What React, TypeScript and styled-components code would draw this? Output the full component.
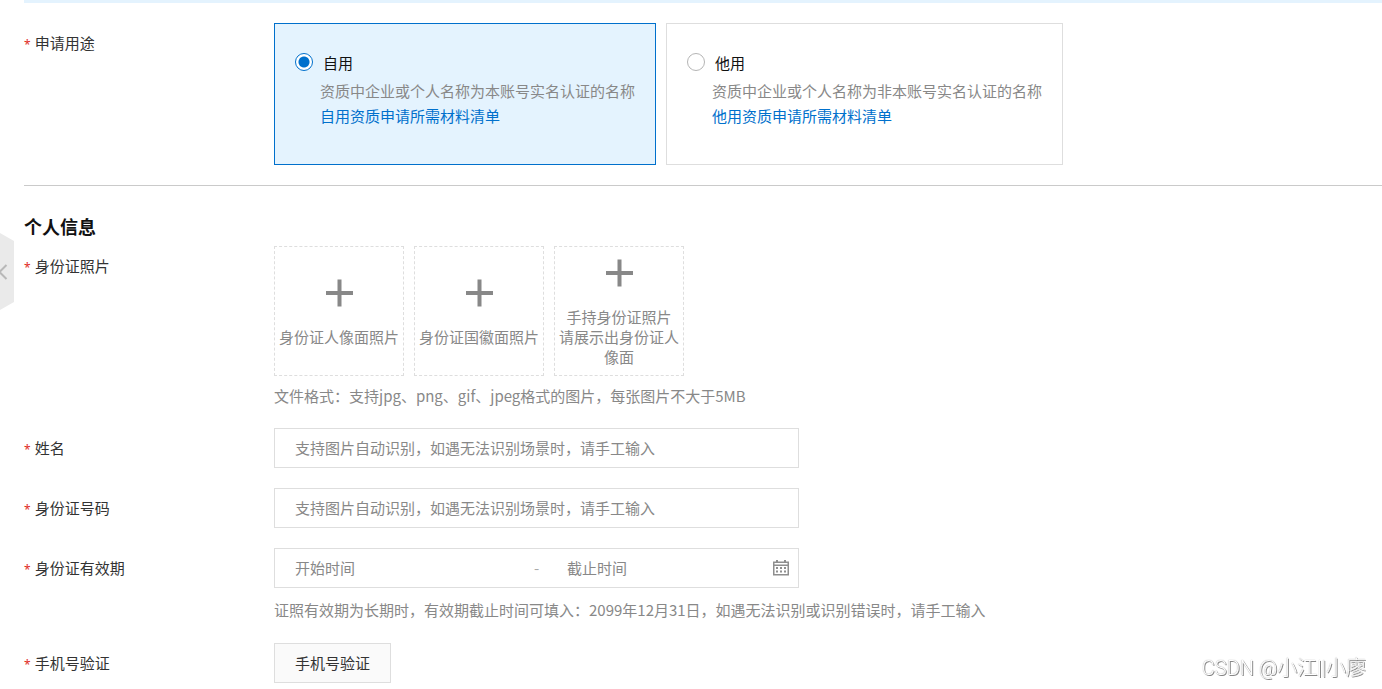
import React, { useState } from "react";
import styled, { createGlobalStyle } from "styled-components";

const BLUE = "#0070cc";
const BORDER = "#dedede";
const MUTED = "#888888";

const GlobalStyle = createGlobalStyle`
  * { box-sizing: border-box; }
  body {
    margin: 0;
    background: #fff;
    color: #333;
    font-family: "Noto Sans CJK SC", sans-serif;
    font-size: 15px;
  }
  input, button { font: inherit; color: inherit; }
`;

const Page = styled.main`
  padding-left: 24px;
`;

const Banner = styled.div`
  height: 3px;
  background: #e4f3fe;
`;

const Section = styled.section`
  padding: 20px 0;
  border-bottom: 1px solid #cacaca;
`;

const PersonalForm = styled.form`
  display: flex;
  flex-direction: column;
  gap: 20px;
  padding-bottom: 6px;
`;

const Heading = styled.h2`
  margin: 28px 0 8px;
  color: #111;
  font-size: 18px;
  font-weight: 700;
  line-height: 24px;
`;

const Row = styled.div`
  display: grid;
  grid-template-columns: 250px minmax(0, 1fr);
  align-items: start;
`;

const Label = styled.label`
  line-height: 40px;
`;

const Star = styled.span`
  margin-right: 4px;
  color: #e02b1d;
  font-family: "Noto Sans", sans-serif;
  font-size: 12px;
  line-height: 1;
`;

const Choices = styled.div`
  display: flex;
  flex-wrap: wrap;
  gap: 10px;
`;

const Card = styled.div<{ $active: boolean }>`
  display: grid;
  grid-template-columns: 18px auto;
  column-gap: 7px;
  align-content: start;
  min-height: 142px;
  padding: 27px 20px 20px;
  border: 1px solid ${(p) => (p.$active ? BLUE : BORDER)};
  background: ${(p) => (p.$active ? "#e4f3fe" : "#fff")};
`;

const Radio = styled.input`
  appearance: none;
  width: 18px;
  height: 18px;
  margin: 2px 0 0;
  border: 1px solid #b5b5b5;
  border-radius: 50%;
  background: #fff;
  &:checked {
    border-color: ${BLUE};
    background: radial-gradient(circle, ${BLUE} 0 5px, #fff 6px);
  }
`;

const CardTitle = styled.label`
  padding-left: 3px;
  color: #111;
  line-height: 24px;
`;

const CardText = styled.p`
  grid-column: 2;
  margin: 3px 0 0;
  color: ${MUTED};
  line-height: 25px;
`;

const CardLink = styled.a`
  grid-column: 2;
  color: ${BLUE};
  line-height: 25px;
  text-decoration: none;
`;

const Uploads = styled.div`
  display: flex;
  flex-wrap: wrap;
  gap: 10px;
`;

const Upload = styled.button`
  display: flex;
  flex-direction: column;
  align-items: center;
  justify-content: center;
  gap: 20px;
  width: 130px;
  height: 130px;
  padding: 4px 4px 0;
  border: 1px dashed ${BORDER};
  background: #fff;
  color: ${MUTED};
  line-height: 20px;
`;

const UploadName = styled.span`
  white-space: pre-line;
`;

const Hint = styled.p<{ $roomy?: boolean }>`
  margin: 0;
  padding: ${(p) => (p.$roomy ? "11px 0 2px" : "9px 0 1px")};
  color: ${MUTED};
  line-height: 22px;
`;

const TextInput = styled.input`
  display: block;
  width: 100%;
  max-width: 525px;
  height: 40px;
  padding: 0 20px 2px;
  border: 1px solid ${BORDER};
  background: #fff;
  &::placeholder { color: ${MUTED}; opacity: 1; }
`;

const DateRange = styled.div`
  display: flex;
  align-items: center;
  max-width: 525px;
  height: 40px;
  padding: 0 9px 0 20px;
  border: 1px solid ${BORDER};
  color: ${MUTED};
`;

const DateInput = styled.input<{ $grow?: boolean }>`
  flex: ${(p) => (p.$grow ? "1 1 0" : "0 1 239px")};
  min-width: 0;
  padding: 0 0 2px;
  border: 0;
  background: transparent;
  outline: none;
  &::placeholder { color: ${MUTED}; opacity: 1; }
`;

const Dash = styled.span`
  width: 33px;
  padding-bottom: 2px;
  color: #aaa;
`;

const IconButton = styled.button`
  display: flex;
  padding: 0;
  border: 0;
  background: none;
`;

const VerifyButton = styled.button`
  height: 40px;
  padding: 0 20px 2px;
  border: 1px solid ${BORDER};
  background: #fafafa;
`;

const CollapseTab = styled.button`
  position: fixed;
  top: 233px;
  left: 0;
  display: flex;
  align-items: center;
  width: 14px;
  height: 77px;
  padding: 0;
  border: 0;
  background: #eaeaea;
  clip-path: polygon(0 0, 100% 8px, 100% 69px, 0 100%);
`;

const Watermark = styled.div`
  position: fixed;
  right: 16px;
  bottom: 6px;
  color: #fff;
  font-family: Roboto, "Noto Sans CJK SC", sans-serif;
  font-size: 20px;
  font-weight: 300;
  line-height: 30px;
  text-shadow: 1px 1px 0 #888, 0 0 1px #888;
`;

function PlusIcon() {
  return (
    <svg width="28" height="28" viewBox="0 0 28 28" fill={MUTED} aria-hidden="true">
      <path d="M12.500.5h4v11.500H28v4H16.500v11.500h-4V16H1v-4h11.500z" />
    </svg>
  );
}

function CalendarIcon() {
  return (
    <svg width="16" height="16" viewBox="0 0 16 16" fill="#8e8e8e" aria-hidden="true">
      <path
        fillRule="evenodd"
        d="M3 0h2v1.500h6V0h2v1.500h3V15.500H0V1.500h3zM1.500 3v1.500h13V3zM1.500 6v8h13V6z"
      />
      <path d="M3 7h2v2H3zM7 7h2v2H7zM11 7h2v2h-2zM3 10.500h2v2H3zM7 10.500h2v2H7zM11 10.500h2v2h-2z" />
    </svg>
  );
}

function FieldLabel({ text, htmlFor, id }: { text: string; htmlFor?: string; id?: string }) {
  return (
    <Label htmlFor={htmlFor} id={id} as={htmlFor ? "label" : "span"}>
      <Star>*</Star>
      {text}
    </Label>
  );
}

const purposes = [
  {
    id: "self",
    title: "自用",
    text: "资质中企业或个人名称为本账号实名认证的名称",
    link: "自用资质申请所需材料清单",
  },
  {
    id: "other",
    title: "他用",
    text: "资质中企业或个人名称为非本账号实名认证的名称",
    link: "他用资质申请所需材料清单",
  },
];

const photos = ["身份证人像面照片", "身份证国徽面照片", "手持身份证照片\n请展示出身份证人像面"];

const AUTO_HINT = "支持图片自动识别，如遇无法识别场景时，请手工输入";

export default function App() {
  const [purpose, setPurpose] = useState("self");
  return (
    <>
      <GlobalStyle />
      <Page>
        <Banner />
        <Section>
          <Row>
            <FieldLabel text="申请用途" id="purpose-label" />
            <Choices role="radiogroup" aria-labelledby="purpose-label">
              {purposes.map((p) => (
                <Card key={p.id} $active={purpose === p.id}>
                  <Radio
                    type="radio"
                    name="purpose"
                    id={p.id}
                    checked={purpose === p.id}
                    onChange={() => setPurpose(p.id)}
                  />
                  <CardTitle htmlFor={p.id}>{p.title}</CardTitle>
                  <CardText>{p.text}</CardText>
                  <CardLink href="#materials">{p.link}</CardLink>
                </Card>
              ))}
            </Choices>
          </Row>
        </Section>
        <Heading>个人信息</Heading>
        <PersonalForm>
          <Row>
            <FieldLabel text="身份证照片" id="photo-label" />
            <div role="group" aria-labelledby="photo-label">
              <Uploads>
                {photos.map((name) => (
                  <Upload type="button" key={name}>
                    <PlusIcon />
                    <UploadName>{name}</UploadName>
                  </Upload>
                ))}
              </Uploads>
              <Hint>文件格式：支持jpg、png、gif、jpeg格式的图片，每张图片不大于5MB</Hint>
            </div>
          </Row>
          <Row>
            <FieldLabel text="姓名" htmlFor="name" />
            <TextInput id="name" placeholder={AUTO_HINT} />
          </Row>
          <Row>
            <FieldLabel text="身份证号码" htmlFor="id-number" />
            <TextInput id="id-number" placeholder={AUTO_HINT} />
          </Row>
          <Row>
            <FieldLabel text="身份证有效期" htmlFor="valid-from" />
            <div>
              <DateRange>
                <DateInput id="valid-from" placeholder="开始时间" />
                <Dash>-</Dash>
                <DateInput $grow aria-label="截止时间" placeholder="截止时间" />
                <IconButton type="button" aria-label="选择日期">
                  <CalendarIcon />
                </IconButton>
              </DateRange>
              <Hint $roomy>
                证照有效期为长期时，有效期截止时间可填入：2099年12月31日，如遇无法识别或识别错误时，请手工输入
              </Hint>
            </div>
          </Row>
          <Row>
            <FieldLabel text="手机号验证" htmlFor="verify" />
            <div>
              <VerifyButton type="button" id="verify">
                手机号验证
              </VerifyButton>
            </div>
          </Row>
        </PersonalForm>
      </Page>
      <CollapseTab type="button" aria-label="收起">
        <svg width="8" height="16" viewBox="0 0 8 16" fill="none" stroke="#b8b8b8" strokeWidth="2" aria-hidden="true">
          <path d="M6.500 1L-.5 8l7 7" />
        </svg>
      </CollapseTab>
      <Watermark>CSDN @小江||小廖</Watermark>
    </>
  );
}
